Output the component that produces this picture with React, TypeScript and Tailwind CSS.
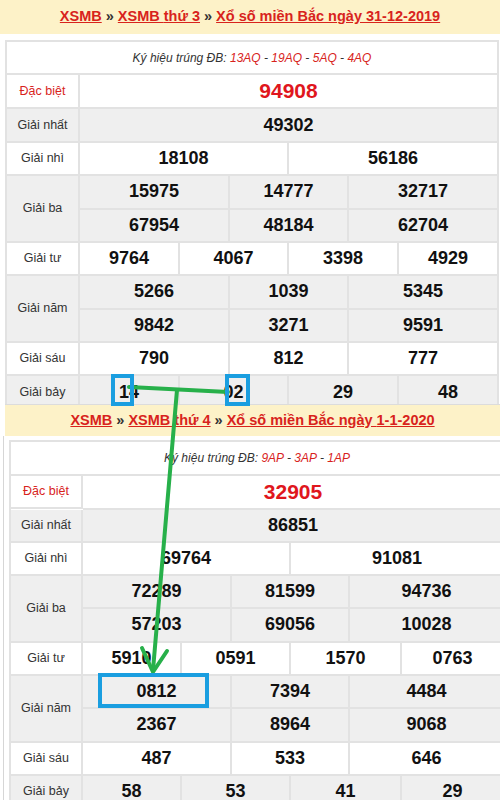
import React from "react";

type Row = {
  label: string;
  bg: string;
  h: string;
  special?: boolean;
  lines: { cells: string[]; widths: string[] }[];
};

const font = { fontFamily: '"Liberation Sans", Arial, sans-serif' };

const Header = ({ day, date }: { day: string; date: string }) => (
  <div className="flex items-center justify-center h-full text-[14.5px] font-bold text-[#333]">
    <a href="#" className="text-[#d8231c] underline">XSMB</a>
    <span className="mx-[4px]">»</span>
    <a href="#" className="text-[#d8231c] underline">XSMB {day}</a>
    <span className="mx-[4px]">»</span>
    <a href="#" className="text-[#d8231c] underline">Xổ số miền Bắc ngày {date}</a>
  </div>
);

const KyHieu = ({ codes, h }: { codes: string[]; h: string }) => (
  <div className={`flex items-center justify-center ${h} border-b-2 border-r-2 border-[#e2e2e2] bg-white text-[12px] italic text-[#333]`}>
    <span>
      Ký hiệu trúng ĐB:{" "}
      {codes.map((c, i) => (
        <React.Fragment key={c}>
          <span className="text-[#d8231c]">{c}</span>
          {i < codes.length - 1 ? " - " : ""}
        </React.Fragment>
      ))}
    </span>
  </div>
);

const Table = ({ rows, codes, labelW, khH }: { rows: Row[]; codes: string[]; labelW: string; khH: string }) => (
  <div className="border-l-2 border-t-2 border-[#e2e2e2]">
    <KyHieu codes={codes} h={khH} />
    {rows.map((r) => (
      <div key={r.label} className={`flex ${r.bg}`}>
        <div
          className={`${labelW} ${r.h} shrink-0 flex items-center justify-center border-b-2 border-r-2 border-[#e2e2e2] text-[12.5px] ${
            r.special ? "text-[#d8231c]" : "text-[#333]"
          }`}
        >
          {r.label}
        </div>
        <div className="flex-1 flex flex-col">
          {r.lines.map((ln, li) => (
            <div key={li} className="flex flex-1">
              {ln.cells.map((c, ci) => (
                <div
                  key={ci}
                  className={`${ln.widths[ci]} flex items-center justify-center border-b-2 border-r-2 border-[#e2e2e2] font-bold ${
                    r.special ? "text-[21px] text-[#e0161d]" : "text-[18px] text-[#111]"
                  }`}
                >
                  {c}
                </div>
              ))}
            </div>
          ))}
        </div>
      </div>
    ))}
  </div>
);

const w1 = {
  one: ["flex-1"],
  two: ["w-[209px]", "flex-1"],
  three: ["w-[150px]", "w-[119px]", "flex-1"],
  four: ["w-[100px]", "w-[109px]", "w-[110px]", "flex-1"],
};

const w2 = {
  one: ["flex-1"],
  two: ["w-[208px]", "flex-1"],
  three: ["w-[149px]", "w-[118px]", "flex-1"],
  four: ["w-[99px]", "w-[109px]", "w-[111px]", "flex-1"],
};

const rows1: Row[] = [
  { label: "Đặc biệt", bg: "bg-white", h: "h-[34px]", special: true, lines: [{ cells: ["94908"], widths: w1.one }] },
  { label: "Giải nhất", bg: "bg-[#efefef]", h: "h-[34px]", lines: [{ cells: ["49302"], widths: w1.one }] },
  { label: "Giải nhì", bg: "bg-white", h: "h-[33px]", lines: [{ cells: ["18108", "56186"], widths: w1.two }] },
  {
    label: "Giải ba",
    bg: "bg-[#efefef]",
    h: "h-[67px]",
    lines: [
      { cells: ["15975", "14777", "32717"], widths: w1.three },
      { cells: ["67954", "48184", "62704"], widths: w1.three },
    ],
  },
  { label: "Giải tư", bg: "bg-white", h: "h-[33px]", lines: [{ cells: ["9764", "4067", "3398", "4929"], widths: w1.four }] },
  {
    label: "Giải năm",
    bg: "bg-[#efefef]",
    h: "h-[67px]",
    lines: [
      { cells: ["5266", "1039", "5345"], widths: w1.three },
      { cells: ["9842", "3271", "9591"], widths: w1.three },
    ],
  },
  { label: "Giải sáu", bg: "bg-white", h: "h-[33px]", lines: [{ cells: ["790", "812", "777"], widths: w1.three }] },
  { label: "Giải bảy", bg: "bg-[#efefef]", h: "h-[34px]", lines: [{ cells: ["14", "02", "29", "48"], widths: w1.four }] },
];

const rows2: Row[] = [
  { label: "Đặc biệt", bg: "bg-white", h: "h-[33px]", special: true, lines: [{ cells: ["32905"], widths: w2.one }] },
  { label: "Giải nhất", bg: "bg-[#efefef]", h: "h-[33px]", lines: [{ cells: ["86851"], widths: w2.one }] },
  { label: "Giải nhì", bg: "bg-white", h: "h-[33px]", lines: [{ cells: ["69764", "91081"], widths: w2.two }] },
  {
    label: "Giải ba",
    bg: "bg-[#efefef]",
    h: "h-[67px]",
    lines: [
      { cells: ["72289", "81599", "94736"], widths: w2.three },
      { cells: ["57203", "69056", "10028"], widths: w2.three },
    ],
  },
  { label: "Giải tư", bg: "bg-white", h: "h-[33px]", lines: [{ cells: ["5910", "0591", "1570", "0763"], widths: w2.four }] },
  {
    label: "Giải năm",
    bg: "bg-[#efefef]",
    h: "h-[67px]",
    lines: [
      { cells: ["0812", "7394", "4484"], widths: w2.three },
      { cells: ["2367", "8964", "9068"], widths: w2.three },
    ],
  },
  { label: "Giải sáu", bg: "bg-white", h: "h-[33px]", lines: [{ cells: ["487", "533", "646"], widths: w2.three }] },
  { label: "Giải bảy", bg: "bg-[#efefef]", h: "h-[33px]", lines: [{ cells: ["58", "53", "41", "29"], widths: w2.four }] },
];

export default function App() {
  return (
    <div className="relative w-[500px] h-[800px] overflow-hidden bg-white" style={font}>
      {/* first day */}
      <div className="h-[404px] overflow-hidden">
        <div className="h-[34px] bg-[#fdf2c8]">
          <Header day="thứ 3" date="31-12-2019" />
        </div>
        <div className="pt-[6px] pl-[5px] pr-[1px]">
          <Table rows={rows1} codes={["13AQ", "19AQ", "5AQ", "4AQ"]} labelW="w-[73px]" khH="h-[33px]" />
        </div>
      </div>

      {/* second day */}
      <div className="pl-[5px]">
        <div className="h-[32px] bg-[#fdf2c8] border-t border-[#dcdcdc]">
          <Header day="thứ 4" date="1-1-2020" />
        </div>
      </div>
      <div className="ml-[3px] border-l border-[#d6d6d6] pl-[5px] pt-[4px] h-[400px]">
        <div className="w-[496px]">
          <Table rows={rows2} codes={["9AP", "3AP", "1AP"]} labelW="w-[72px]" khH="h-[34px]" />
        </div>
      </div>

      {/* annotation overlay */}
      <svg className="absolute left-0 top-0 pointer-events-none" width="500" height="800" viewBox="0 0 500 800">
        <g fill="none" stroke="#27b04a" strokeWidth="4" strokeLinecap="round" strokeLinejoin="round">
          <line x1="129" y1="387" x2="228" y2="392" />
          <line x1="177" y1="390" x2="153" y2="670" />
          <polyline points="142,648 153,672 167,651" />
        </g>
        <g fill="none" stroke="#1a9ee0" strokeWidth="4">
          <rect x="113" y="376" width="19" height="28" />
          <rect x="227" y="376" width="21" height="28" />
          <rect x="100" y="675" width="107" height="31" />
        </g>
      </svg>
    </div>
  );
}
